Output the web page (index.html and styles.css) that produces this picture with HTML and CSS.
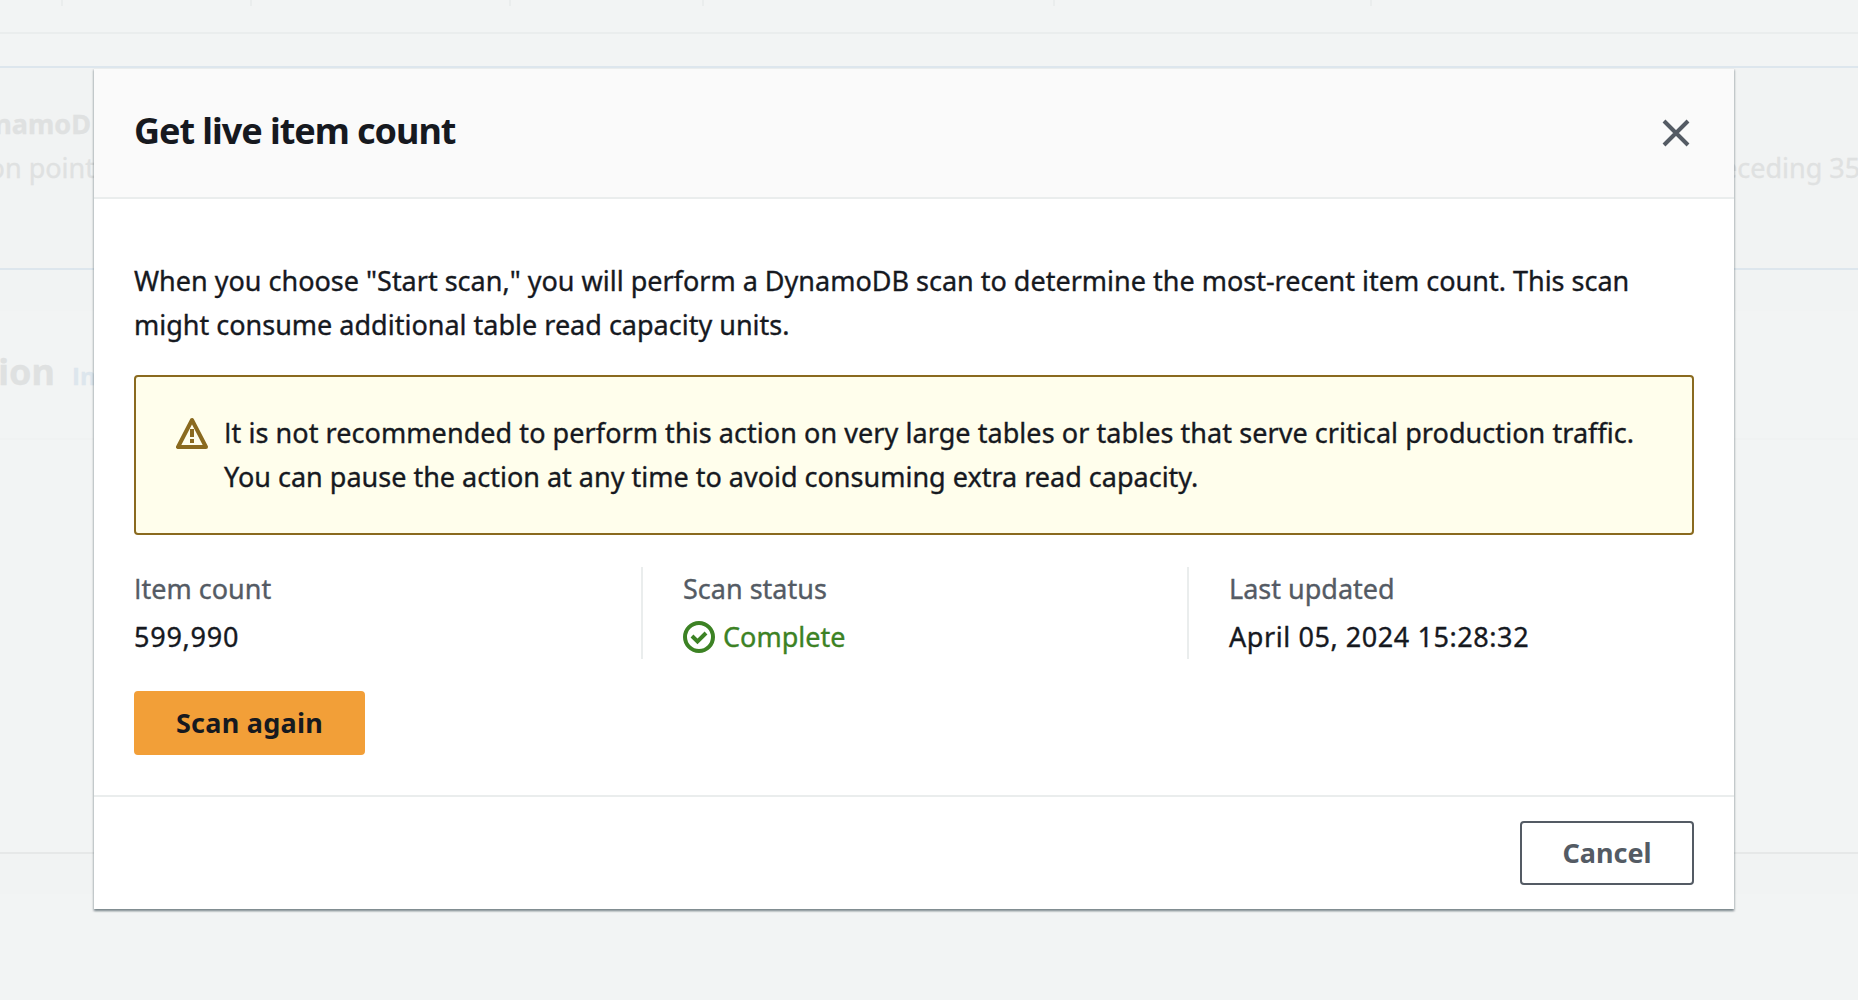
FILE: index.html
```html
<!DOCTYPE html>
<html lang="en">
<head>
<meta charset="utf-8">
<title>Get live item count</title>
<link rel="stylesheet" href="styles.css">
</head>
<body>
<div class="page">
  <div class="ticks"><i></i><i></i><i></i><i></i><i></i><i></i></div>
  <div class="strip"></div>
  <div class="flash">
    <div class="flash-left">
      <b>namoD</b>
      <p>on point</p>
    </div>
    <div class="flash-right">eceding 35</div>
  </div>
  <div class="space"></div>
  <div class="card">
    <div class="card-head"><h3>tion</h3><a>In</a></div>
  </div>
  <div class="card-foot"></div>
</div>

<div class="modal" role="dialog">
  <header class="modal-head">
    <h2>Get live item count</h2>
    <svg class="close" viewBox="0 0 32 32"><path d="M4 4 28 28M28 4 4 28"/></svg>
  </header>
  <main class="modal-body">
    <p class="intro">When you choose "Start scan," you will perform a DynamoDB scan to determine the most-recent item count. This scan<br>might consume additional table read capacity units.</p>
    <div class="alert">
      <svg class="warn" viewBox="0 0 32 32"><path class="tri" d="M16 3 2 30H30Z"/><path class="bang" d="M16 12v8M16 22v4"/></svg>
      <p><span class="first-line"><span class="cap">I</span>t is not recommended to perform this action on very large tables or tables that serve critical production traffic.</span><br>You can pause the action at any time to avoid consuming extra read capacity.</p>
    </div>
    <div class="columns">
      <div class="col">
        <div class="label"><span class="cap">I</span>tem count</div>
        <div class="value count">599,990</div>
      </div>
      <div class="col">
        <div class="label">Scan status</div>
        <div class="value ok"><svg class="check" viewBox="0 0 32 32"><circle cx="16" cy="16" r="14"/><path d="m9 15 5.500 5.500 8.500-8.500"/></svg>Complete</div>
      </div>
      <div class="col">
        <div class="label">Last updated</div>
        <div class="value date">April 05, 2024 15:28:32</div>
      </div>
    </div>
    <button class="btn primary">Scan again</button>
  </main>
  <footer class="modal-foot"><button class="btn normal">Cancel</button></footer>
</div>
</body>
</html>
```
FILE: styles.css
```css
* { box-sizing: border-box; }
body {
  margin: 0;
  width: 1858px;
  height: 1000px;
  overflow: hidden;
  position: relative;
  background: #f2f4f4;
  color: #16191f;
  font: 27px/44px "Noto Sans", "Open Sans", sans-serif;
}
h2, h3, p { margin: 0; }

/* Dimmed page behind the dialog */
.page { height: 1000px; color: #dfe1e1; background: #f2f4f4; overflow: hidden; white-space: nowrap; -webkit-text-stroke: .3px; }
.ticks { height: 6px; display: grid; grid-template-columns: 63px 189px 259px 193px 351px 317px; }
.ticks i { border-right: 2px solid #eaeded; }
.strip { height: 28px; border-bottom: 2px solid #eaeded; }
.flash {
  margin-top: 32px;
  height: 204px;
  padding-top: 34px;
  border-top: 2px solid #dde6ed;
  border-bottom: 2px solid #dde6ed;
  background: #f1f3f3;
  display: flex;
  justify-content: space-between;
}
.flash-left { width: 95px; display: flex; flex-direction: column; align-items: flex-end; }
.flash-left b { margin-right: 4px; }
.flash-right { width: 136px; padding-top: 44px; }
.space { height: 41px; background: #f1f3f3; }
.card { height: 543px; border-bottom: 2px solid #e6e8e8; background: #f2f4f4; }
.card-head { height: 129px; border-bottom: 2px solid #f0f2f2; padding-top: 39px; display: flex; gap: 17px; align-items: baseline; }
.card-head h3 { width: 55px; display: flex; justify-content: flex-end; font-size: 36px; }
.card-head a { color: #dde6ed; font: 700 24px/44px "Open Sans", sans-serif; }
.card-foot { height: 40px; background: #f1f3f3; }

/* Dialog */
.modal {
  position: absolute;
  left: 94px;
  top: 68px;
  width: 1640px;
  height: 841px;
  display: flex;
  flex-direction: column;
  background: #fff;
  border-top: 1px solid #eaeded;
  box-shadow: 0 2px 2px rgba(0, 28, 36, .3), 1px 2px 2px rgba(0, 28, 36, .15), -1px 2px 2px rgba(0, 28, 36, .15);
}
.modal-head {
  height: 130px;
  padding: 0 42px 0 40px;
  display: flex;
  justify-content: space-between;
  align-items: center;
  background: #fafafa;
  border-bottom: 2px solid #eaeded;
}
.modal-head h2 { font-size: 36px; line-height: 44px; letter-spacing: -1.05px; padding-bottom: 4px; }
.close { width: 32px; height: 32px; fill: none; stroke: #545b64; stroke-width: 4; }
.modal-body { flex: 1; padding: 60px 40px 0; -webkit-text-stroke: .35px; }
.cap { font-family: "Open Sans", sans-serif; }
.intro { white-space: nowrap; }
.alert {
  margin-top: 28px;
  height: 160px;
  padding: 34px 40px;
  display: flex;
  gap: 16px;
  border: 2px solid #8a6a1f;
  border-radius: 4px;
  background: #fffeec;
  white-space: nowrap;
}
.first-line { letter-spacing: .06px; }
.warn { width: 32px; height: 32px; margin-top: 6px; fill: none; stroke: #8a6a1f; stroke-width: 4; flex: none; }
.tri { stroke-linejoin: round; }
.columns { margin-top: 32px; height: 92px; display: grid; grid-template-columns: 507px 546px 1fr; }
.col { display: flex; flex-direction: column; gap: 4px; }
.col + .col { border-left: 2px solid #eaeded; padding-left: 40px; }
.label { color: #545b64; }
.value { display: flex; align-items: center; }
.count { letter-spacing: .75px; }
.date { letter-spacing: .57px; }
.ok { color: #3c8224; gap: 8px; }
.check { width: 32px; height: 32px; fill: none; stroke: #3c8224; stroke-width: 4; }
.btn {
  height: 64px;
  padding: 0;
  border: 2px solid;
  border-radius: 4px;
  display: flex;
  align-items: center;
  justify-content: center;
  font: 700 27px/44px "Noto Sans", "Open Sans", sans-serif;
}
.primary { margin-top: 32px; width: 231px; background: #f29f38; border-color: #f29f38; color: #16191f; letter-spacing: .25px; -webkit-text-stroke: 0; }
.normal { width: 174px; background: #fff; border-color: #545b64; color: #545b64; }
.modal-foot { height: 114px; padding: 24px 40px; display: flex; justify-content: flex-end; border-top: 2px solid #eaeded; }
```
